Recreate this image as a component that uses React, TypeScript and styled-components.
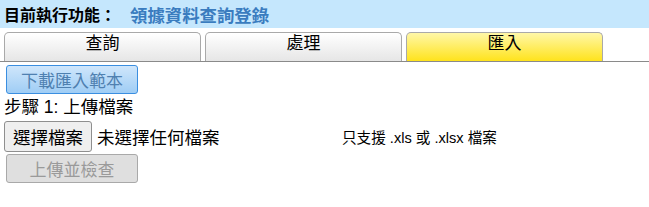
import React from "react";
import styled, { createGlobalStyle } from "styled-components";

const Global = createGlobalStyle`
  html, body { margin: 0; padding: 0; background: #fff; }
  body {
    font-family: "Liberation Sans", "Noto Sans CJK TC", sans-serif;
    font-size: 17px;
    color: #000;
  }
`;

const Header = styled.div`
  height: 28px;
  background: #c5e7fd;
  display: flex;
  align-items: center;
  padding-left: 4px;
  font-weight: bold;
  font-size: 16px;
`;

const Current = styled.span`
  color: #3a7cbf;
  margin-left: 14px;
  font-size: 17.4px;
`;

const Tabs = styled.div`
  display: flex;
  gap: 4px;
  padding: 4px 0 0 4px;
  border-bottom: 1px solid #8a8a8a;
`;

const Tab = styled.div<{ $active?: boolean }>`
  width: 197px;
  height: 29px;
  box-sizing: border-box;
  border: 1px solid #a9a9a9;
  border-bottom: none;
  border-radius: 5px 5px 0 0;
  background: ${(p) =>
    p.$active
      ? "linear-gradient(#fff7a8, #ffe31c)"
      : "linear-gradient(#ffffff, #e6e6e6)"};
  display: flex;
  justify-content: center;
  line-height: 22px;
  font-size: 17px;
`;

const Body = styled.div`
  padding: 3px 0 0 4px;
  display: flex;
  flex-direction: column;
  align-items: flex-start;
`;

const BlueButton = styled.button`
  margin-left: 2px;
  width: 132px;
  height: 29px;
  border: 1px solid #3a8ee0;
  border-radius: 3px;
  background: linear-gradient(#cfe6fb, #9fcdf5);
  color: #4f80b0;
  font-family: inherit;
  font-size: 17px;
  padding: 0;
`;

const Step = styled.div`
  margin-top: 1px;
  line-height: 24px;
  font-size: 17.5px;
`;

const FileRow = styled.div`
  display: flex;
  align-items: center;
  margin-top: 2px;
  width: 100%;
`;

const FileButton = styled.button`
  height: 31px;
  width: 88px;
  border: 1px solid #8f8f8f;
  border-radius: 3px;
  background: #efefef;
  font-family: inherit;
  font-size: 17.5px;
  color: #000;
  padding: 0;
`;

const FileName = styled.span`
  margin-left: 5px;
  width: 245px;
  font-size: 17.5px;
`;

const Hint = styled.span`
  font-size: 14.6px;
`;

const DisabledButton = styled.button`
  margin: 2px 0 0 2px;
  width: 132px;
  height: 29px;
  border: 1px solid #a9a9a9;
  border-radius: 3px;
  background: #dfdfdf;
  color: #9a9a9a;
  font-family: inherit;
  font-size: 17px;
  padding: 0;
`;

export default function App() {
  return (
    <>
      <Global />
      <Header>
        目前執行功能：<Current>領據資料查詢登錄</Current>
      </Header>
      <Tabs>
        <Tab>查詢</Tab>
        <Tab>處理</Tab>
        <Tab $active>匯入</Tab>
      </Tabs>
      <Body>
        <BlueButton>下載匯入範本</BlueButton>
        <Step>步驟 1: 上傳檔案</Step>
        <FileRow>
          <FileButton>選擇檔案</FileButton>
          <FileName>未選擇任何檔案</FileName>
          <Hint>只支援 .xls 或 .xlsx 檔案</Hint>
        </FileRow>
        <DisabledButton disabled>上傳並檢查</DisabledButton>
      </Body>
    </>
  );
}
